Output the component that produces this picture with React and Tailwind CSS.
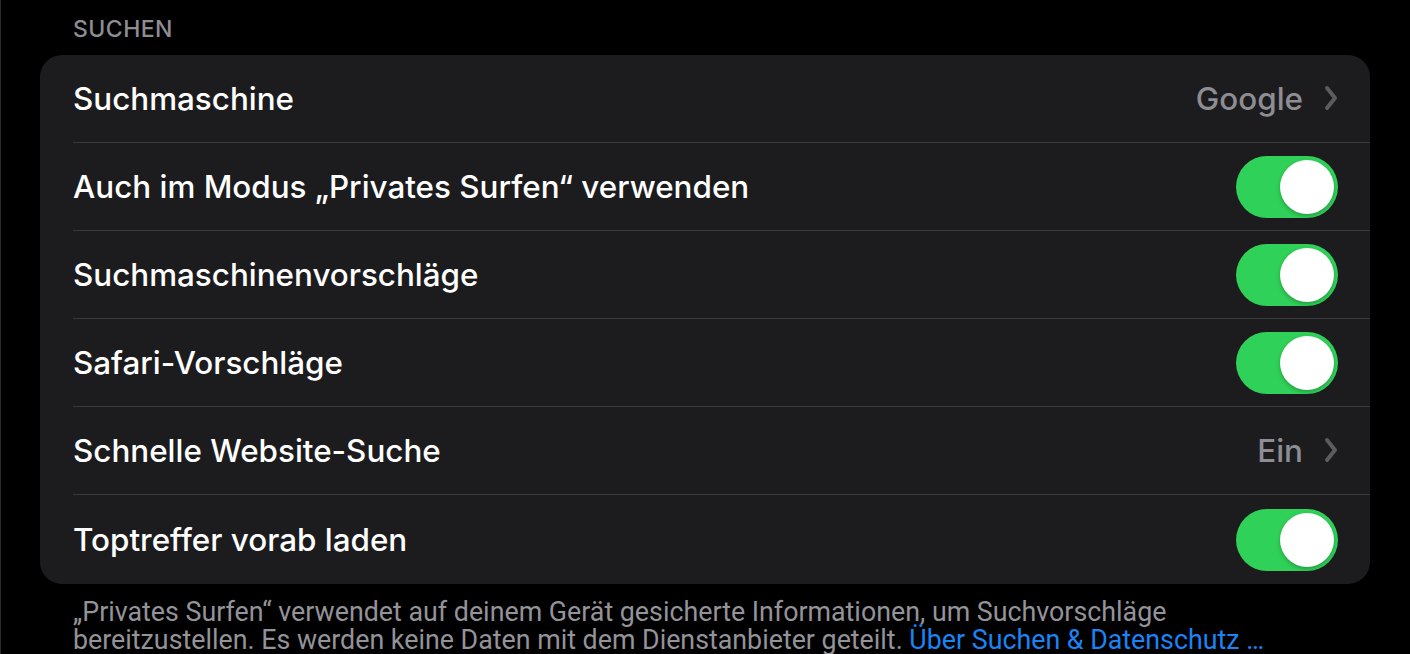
import React from "react";

const rows = [
  { label: "Suchmaschine", value: "Google" },
  { label: "Auch im Modus „Privates Surfen“ verwenden", toggle: true },
  { label: "Suchmaschinenvorschläge", toggle: true },
  { label: "Safari-Vorschläge", toggle: true },
  { label: "Schnelle Website-Suche", value: "Ein" },
  { label: "Toptreffer vorab laden", toggle: true },
];

const Toggle = () => (
  <div className="w-[102px] h-[62px] rounded-full bg-[#30d158] flex items-center justify-end pr-[4px]">
    <div className="w-[54px] h-[54px] rounded-full bg-white shadow-[0_2px_4px_rgba(0,0,0,0.25)]"></div>
  </div>
);

const Chevron = () => (
  <svg width="14" height="26" viewBox="0 0 14 26" className="ml-[21px]">
    <path d="M3 3 L11 13 L3 23" fill="none" stroke="#5b5b60" strokeWidth="4" strokeLinecap="round" strokeLinejoin="round" />
  </svg>
);

const App = () => {
  return (
    <div className="w-[1410px] h-[654px] bg-black overflow-hidden border-l border-[#2a2a2c] font-['Inter',sans-serif]">
      <div className="pl-[72px] pt-[12px] h-[55px] text-[23px] font-medium text-[#8d8d93] tracking-[0.02em]">SUCHEN</div>

      {/* Einstellungen */}
      <div className="ml-[39px] w-[1330px] bg-[#1c1c1e] rounded-[22px] overflow-hidden">
        {rows.map((row, i) => (
          <div key={row.label} className="pl-[33px]">
            <div
              className={`h-[88px] flex items-center justify-between pr-[32px] ${
                i < rows.length - 1 ? "border-b border-[#38383a]" : "h-[89px]"
              }`}
            >
              <span className="text-[31.4px] font-medium text-white pt-[3px]">{row.label}</span>
              {row.toggle ? (
                <Toggle />
              ) : (
                <div className="flex items-center">
                  <span className="text-[31.4px] font-medium text-[#8d8d93] pt-[3px]">{row.value}</span>
                  <Chevron />
                </div>
              )}
            </div>
          </div>
        ))}
      </div>

      <p className="pl-[72px] pt-[14px] text-[26.8px] leading-[28px] text-[#939399] font-['Roboto',sans-serif]">
        „Privates Surfen“ verwendet auf deinem Gerät gesicherte Informationen, um Suchvorschläge
        <br />
        bereitzustellen. Es werden keine Daten mit dem Dienstanbieter geteilt.{" "}
        <span className="text-[#1a84f5]">Über Suchen &amp; Datenschutz …</span>
      </p>
    </div>
  );
};

export default App;
